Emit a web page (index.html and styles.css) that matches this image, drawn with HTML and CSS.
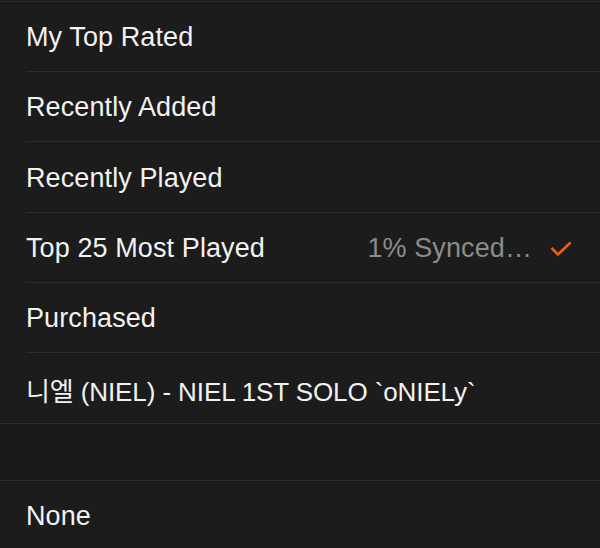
FILE: index.html
```
<!DOCTYPE html>
<html>
<head>
<meta charset="utf-8">
<link rel="stylesheet" href="styles.css">
</head>
<body>
<div class="topline"></div>
<div class="group">
  <div class="row"><span class="label">My Top Rated</span></div>
  <div class="row"><span class="label">Recently Added</span></div>
  <div class="row tall"><span class="label">Recently Played</span></div>
  <div class="row">
    <span class="label">Top 25 Most Played</span>
    <span class="detail">1% Synced…</span>
    <svg class="check" width="22" height="16" viewBox="0 0 22 16"><polyline points="1.5,7 8,13.5 20.5,1.5" fill="none" stroke="#f45a11" stroke-width="2.6" stroke-linecap="butt"/></svg>
  </div>
  <div class="row"><span class="label">Purchased</span></div>
  <div class="row last"><span class="label">니엘 (NIEL) - NIEL 1ST SOLO `oNIELy`</span></div>
</div>
<div class="gap"></div>
<div class="group">
  <div class="row"><span class="label">None</span></div>
</div>
</body>
</html>
```
FILE: styles.css
```
html, body {
  margin: 0;
  padding: 0;
  background: #1c1c1c;
  font-family: "Liberation Sans", "Noto Sans CJK KR", sans-serif;
  color: #f2f2f2;
  overflow: hidden;
}
.topline {
  margin-top: 1px;
  height: 1px;
  background: #2c2c2c;
}
.group {
  background: #1c1c1c;
}
.row {
  height: 70px;
  display: flex;
  align-items: center;
  margin-left: 26px;
  padding-right: 28px;
  padding-top: 2px;
  border-bottom: 1px solid #2e2e2e;
  box-sizing: border-box;
  font-size: 27px;
  letter-spacing: 0.1px;
}
.row.tall {
  height: 71px;
}
.row.last {
  margin-left: 0;
  padding-left: 26px;
  height: 71px;
  font-size: 26px;
  letter-spacing: -0.1px;
}
.label {
  flex: 1;
  white-space: nowrap;
}
.detail {
  color: #8c8c8c;
  margin-right: 18px;
}
.check {
  display: block;
  margin-top: 0;
}
.gap {
  height: 56px;
  background: #181818;
  border-bottom: 1px solid #2e2e2e;
}
```
